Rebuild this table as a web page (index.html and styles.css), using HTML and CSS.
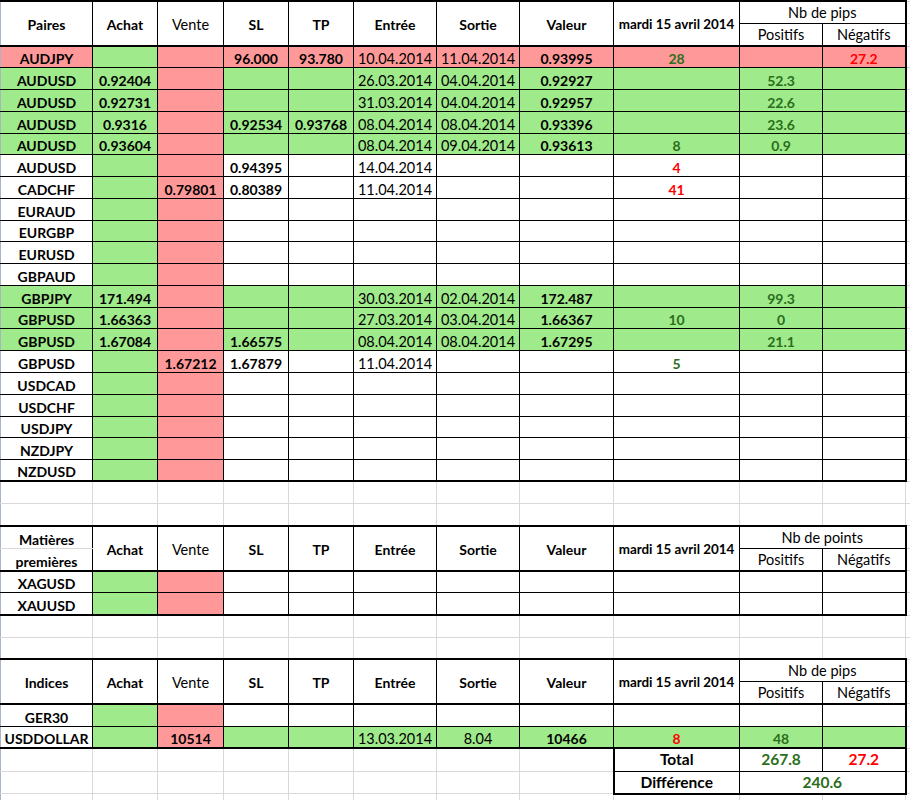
FILE: index.html
```html
<!DOCTYPE html>
<html lang="fr">
<head>
<meta charset="utf-8">
<title>Suivi des positions</title>
<link rel="stylesheet" href="styles.css">
</head>
<body>
<table class="sheet">
<colgroup>
<col class="c-pair"><col class="c-achat"><col class="c-vente"><col class="c-sl"><col class="c-tp"><col class="c-ent"><col class="c-sor"><col class="c-val"><col class="c-day"><col class="c-pos"><col class="c-neg"><col class="c-x">
</colgroup>
<tbody class="blk">
<tr class="hd top"><td class="h hb" rowspan="2">Paires</td><td class="h hb" rowspan="2">Achat</td><td class="h nb hb" rowspan="2">Vente</td><td class="h hb" rowspan="2">SL</td><td class="h hb" rowspan="2">TP</td><td class="h hb" rowspan="2">Entrée</td><td class="h hb" rowspan="2">Sortie</td><td class="h hb" rowspan="2">Valeur</td><td class="h md hb" rowspan="2">mardi 15 avril 2014</td><td class="hn er" colspan="2">Nb de pips</td><td class="x"></td></tr>
<tr class="hd h2"><td class="hn hb">Positifs</td><td class="hn hb er">Négatifs</td><td class="x"></td></tr>
<tr class="r rp"><td class="b">AUDJPY</td><td class="g"></td><td></td><td class="b">96.000</td><td class="b">93.780</td><td>10.04.2014</td><td>11.04.2014</td><td class="b">0.93995</td><td class="b gn">28</td><td></td><td class="b rd er">27.2</td><td class="x"></td></tr>
<tr class="r rg"><td class="b">AUDUSD</td><td class="b">0.92404</td><td class="p"></td><td></td><td></td><td>26.03.2014</td><td>04.04.2014</td><td class="b">0.92927</td><td></td><td class="b gn">52.3</td><td class="er"></td><td class="x"></td></tr>
<tr class="r rg"><td class="b">AUDUSD</td><td class="b">0.92731</td><td class="p"></td><td></td><td></td><td>31.03.2014</td><td>04.04.2014</td><td class="b">0.92957</td><td></td><td class="b gn">22.6</td><td class="er"></td><td class="x"></td></tr>
<tr class="r rg"><td class="b">AUDUSD</td><td class="b">0.9316</td><td class="p"></td><td class="b">0.92534</td><td class="b">0.93768</td><td>08.04.2014</td><td>08.04.2014</td><td class="b">0.93396</td><td></td><td class="b gn">23.6</td><td class="er"></td><td class="x"></td></tr>
<tr class="r rg"><td class="b">AUDUSD</td><td class="b">0.93604</td><td class="p"></td><td></td><td></td><td>08.04.2014</td><td>09.04.2014</td><td class="b">0.93613</td><td class="b gn">8</td><td class="b gn">0.9</td><td class="er"></td><td class="x"></td></tr>
<tr class="r"><td class="b">AUDUSD</td><td class="g"></td><td class="p"></td><td class="b">0.94395</td><td></td><td>14.04.2014</td><td></td><td></td><td class="b rd">4</td><td></td><td class="er"></td><td class="x"></td></tr>
<tr class="r"><td class="b">CADCHF</td><td class="g"></td><td class="p b">0.79801</td><td class="b">0.80389</td><td></td><td>11.04.2014</td><td></td><td></td><td class="b rd">41</td><td></td><td class="er"></td><td class="x"></td></tr>
<tr class="r"><td class="b">EURAUD</td><td class="g"></td><td class="p"></td><td></td><td></td><td></td><td></td><td></td><td></td><td></td><td class="er"></td><td class="x"></td></tr>
<tr class="r"><td class="b">EURGBP</td><td class="g"></td><td class="p"></td><td></td><td></td><td></td><td></td><td></td><td></td><td></td><td class="er"></td><td class="x"></td></tr>
<tr class="r"><td class="b">EURUSD</td><td class="g"></td><td class="p"></td><td></td><td></td><td></td><td></td><td></td><td></td><td></td><td class="er"></td><td class="x"></td></tr>
<tr class="r"><td class="b">GBPAUD</td><td class="g"></td><td class="p"></td><td></td><td></td><td></td><td></td><td></td><td></td><td></td><td class="er"></td><td class="x"></td></tr>
<tr class="r rg"><td class="b">GBPJPY</td><td class="b">171.494</td><td class="p"></td><td></td><td></td><td>30.03.2014</td><td>02.04.2014</td><td class="b">172.487</td><td></td><td class="b gn">99.3</td><td class="er"></td><td class="x"></td></tr>
<tr class="r rg"><td class="b">GBPUSD</td><td class="b">1.66363</td><td class="p"></td><td></td><td></td><td>27.03.2014</td><td>03.04.2014</td><td class="b">1.66367</td><td class="b gn">10</td><td class="b gn">0</td><td class="er"></td><td class="x"></td></tr>
<tr class="r rg"><td class="b">GBPUSD</td><td class="b">1.67084</td><td class="p"></td><td class="b">1.66575</td><td></td><td>08.04.2014</td><td>08.04.2014</td><td class="b">1.67295</td><td></td><td class="b gn">21.1</td><td class="er"></td><td class="x"></td></tr>
<tr class="r"><td class="b">GBPUSD</td><td class="g"></td><td class="p b">1.67212</td><td class="b">1.67879</td><td></td><td>11.04.2014</td><td></td><td></td><td class="b gn">5</td><td></td><td class="er"></td><td class="x"></td></tr>
<tr class="r"><td class="b">USDCAD</td><td class="g"></td><td class="p"></td><td></td><td></td><td></td><td></td><td></td><td></td><td></td><td class="er"></td><td class="x"></td></tr>
<tr class="r"><td class="b">USDCHF</td><td class="g"></td><td class="p"></td><td></td><td></td><td></td><td></td><td></td><td></td><td></td><td class="er"></td><td class="x"></td></tr>
<tr class="r"><td class="b">USDJPY</td><td class="g"></td><td class="p"></td><td></td><td></td><td></td><td></td><td></td><td></td><td></td><td class="er"></td><td class="x"></td></tr>
<tr class="r"><td class="b">NZDJPY</td><td class="g"></td><td class="p"></td><td></td><td></td><td></td><td></td><td></td><td></td><td></td><td class="er"></td><td class="x"></td></tr>
<tr class="r bot"><td class="b">NZDUSD</td><td class="g"></td><td class="p"></td><td></td><td></td><td></td><td></td><td></td><td></td><td></td><td class="er"></td><td class="x"></td></tr>
</tbody>
<tbody class="gap">
<tr class="s"><td></td><td></td><td></td><td></td><td></td><td></td><td></td><td></td><td></td><td></td><td></td><td></td></tr>
<tr class="s"><td></td><td></td><td></td><td></td><td></td><td></td><td></td><td></td><td></td><td></td><td></td><td></td></tr>
</tbody>
<tbody class="blk">
<tr class="hd top"><td class="b mt1">Matières</td><td class="h hb" rowspan="2">Achat</td><td class="h nb hb" rowspan="2">Vente</td><td class="h hb" rowspan="2">SL</td><td class="h hb" rowspan="2">TP</td><td class="h hb" rowspan="2">Entrée</td><td class="h hb" rowspan="2">Sortie</td><td class="h hb" rowspan="2">Valeur</td><td class="h md hb" rowspan="2">mardi 15 avril 2014</td><td class="hn er" colspan="2">Nb de points</td><td class="x"></td></tr>
<tr class="hd"><td class="b mt2 hb">premières</td><td class="hn hb">Positifs</td><td class="hn hb er">Négatifs</td><td class="x"></td></tr>
<tr class="s"><td class="b">XAGUSD</td><td class="g"></td><td class="p"></td><td></td><td></td><td></td><td></td><td></td><td></td><td></td><td class="er"></td><td class="x"></td></tr>
<tr class="s bot"><td class="b">XAUUSD</td><td class="g"></td><td class="p"></td><td></td><td></td><td></td><td></td><td></td><td></td><td></td><td class="er"></td><td class="x"></td></tr>
</tbody>
<tbody class="gap">
<tr class="s"><td></td><td></td><td></td><td></td><td></td><td></td><td></td><td></td><td></td><td></td><td></td><td></td></tr>
<tr class="s"><td></td><td></td><td></td><td></td><td></td><td></td><td></td><td></td><td></td><td></td><td></td><td></td></tr>
</tbody>
<tbody class="blk">
<tr class="hs top"><td class="h hb" rowspan="2">Indices</td><td class="h hb" rowspan="2">Achat</td><td class="h nb hb" rowspan="2">Vente</td><td class="h hb" rowspan="2">SL</td><td class="h hb" rowspan="2">TP</td><td class="h hb" rowspan="2">Entrée</td><td class="h hb" rowspan="2">Sortie</td><td class="h hb" rowspan="2">Valeur</td><td class="h md hb" rowspan="2">mardi 15 avril 2014</td><td class="hn er" colspan="2">Nb de pips</td><td class="x"></td></tr>
<tr class="hs h2"><td class="hn hb">Positifs</td><td class="hn hb er">Négatifs</td><td class="x"></td></tr>
<tr class="s"><td class="b">GER30</td><td class="g"></td><td class="p"></td><td></td><td></td><td></td><td></td><td></td><td></td><td></td><td class="er"></td><td class="x"></td></tr>
<tr class="s rg bot"><td class="b w">USDDOLLAR</td><td></td><td class="p b">10514</td><td></td><td></td><td>13.03.2014</td><td>8.04</td><td class="b">10466</td><td class="b rd">8</td><td class="b gn">48</td><td class="er"></td><td class="x"></td></tr>
</tbody>
<tbody class="tot">
<tr class="st"><td></td><td></td><td></td><td></td><td></td><td></td><td></td><td></td><td class="t el b lg">Total</td><td class="t b lg gn">267.8</td><td class="t er b lg rd">27.2</td><td class="x"></td></tr>
<tr class="sd"><td></td><td></td><td></td><td></td><td></td><td></td><td></td><td></td><td class="t el eb b lg">Différence</td><td class="t eb er b lg gn" colspan="2">240.6</td><td class="x"></td></tr>
<tr class="s"><td></td><td></td><td></td><td></td><td></td><td></td><td></td><td></td><td></td><td></td><td></td><td></td></tr>
</tbody>
</table>
</body>
</html>
```

FILE: styles.css
```css
html, body {
  margin: 0;
  padding: 0;
  background: #ffffff;
}

body {
  overflow: hidden;
}

.sheet {
  border-collapse: collapse;
  table-layout: fixed;
  width: 945px;
  font-family: Lato, "Open Sans", "DejaVu Sans", sans-serif;
  font-size: 14.5px;
  color: #000000;
}

.c-pair { width: 92px; }
.c-achat { width: 65px; }
.c-vente { width: 66px; }
.c-sl { width: 65px; }
.c-tp { width: 65px; }
.c-ent { width: 83px; }
.c-sor { width: 83px; }
.c-val { width: 94px; }
.c-day { width: 126px; }
.c-pos { width: 83px; }
.c-neg { width: 83px; }
.c-x { width: 40px; }

.sheet td {
  border: 1px solid #d9d9d9;
  padding: 0;
  text-align: center;
  vertical-align: bottom;
  line-height: 17px;
  white-space: nowrap;
  overflow: hidden;
}

.blk td {
  border: 1px solid #000000;
}

tr.hd { height: 22.5px; }
tr.hs { height: 22.2px; }
tr.r { height: 21.78px; }
tr.s { height: 22.2px; }
tr.st { height: 23px; }
tr.sd { height: 22.6px; }

tr.top td { border-top: 2px solid #000000; }
tr.bot td { border-bottom: 2px solid #000000; }

.rg td { background: #9fea8b; }
.rp td { background: #ff9999; }

.b {
  font-weight: 700;
  font-size: 14px;
}

.sheet td.lg { font-size: 15.5px; }

.gn { color: #2b6e1a; }
.rd { color: #ff0000; }

.sheet td.h {
  font-weight: 700;
  font-size: 14px;
  vertical-align: middle;
  padding-top: 2px;
}

.sheet td.nb {
  font-weight: 400;
  font-size: 14.5px;
}

.sheet td.md {
  font-size: 13.4px;
}

.sheet td.hn {
  font-weight: 400;
  vertical-align: middle;
}

.sheet td.hb { border-bottom-width: 2px; }

.sheet td.mt1 { border-bottom-color: #d9d9d9; }
.sheet td.mt2 { border-top-color: #d9d9d9; }

.tot td { vertical-align: middle; }

.sheet td.t { border: 1px solid #000000; }
.sheet td.er { border-right: 2px solid #000000; }
.sheet td.el { border-left: 2px solid #000000; }
.sheet td.eb { border-bottom: 2px solid #000000; }

.sheet td.g { background: #9fea8b; }
.sheet td.p { background: #ff9999; }
.sheet td.w { background: #ffffff; }

.sheet td.x {
  border: 1px solid #d9d9d9;
  background: #ffffff;
}

.sheet tr:not(.h2) > td:first-child {
  border-left-color: #a9b5c4;
}
```
